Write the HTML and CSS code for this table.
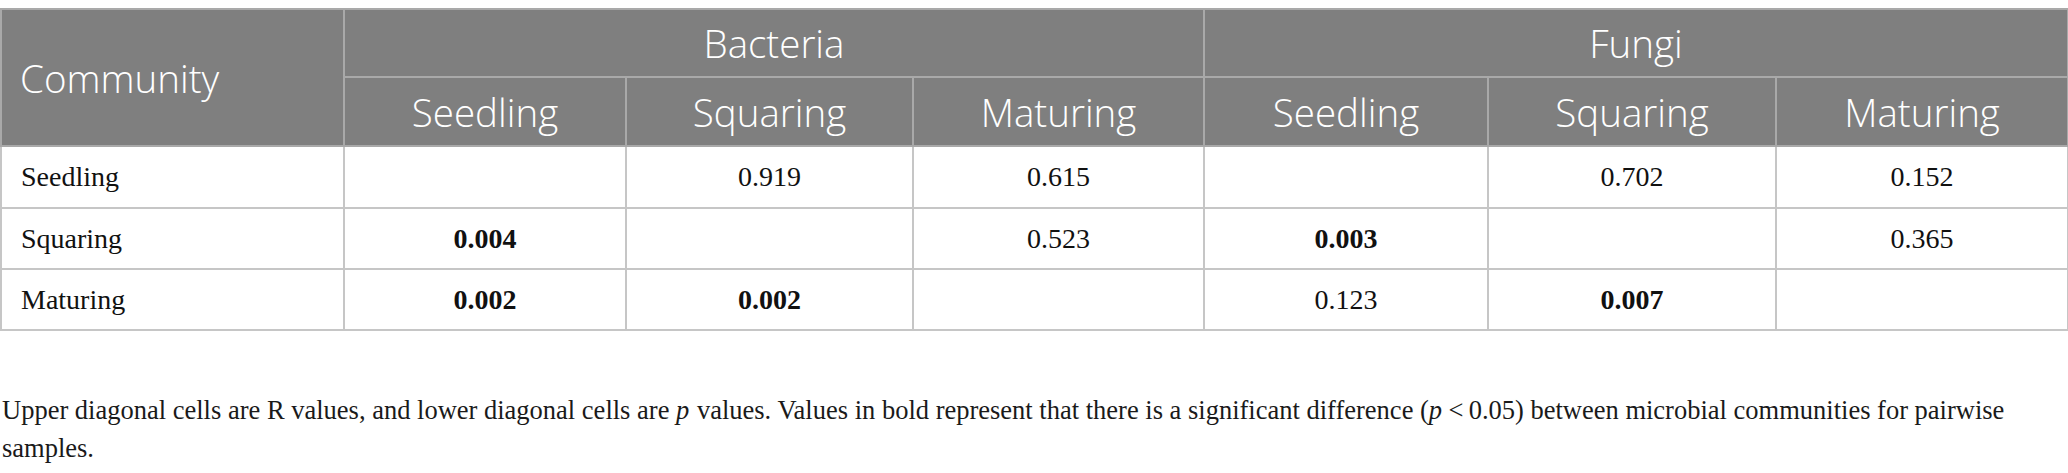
FILE: index.html
```html
<!DOCTYPE html>
<html lang="en">
<head>
<meta charset="utf-8">
<title>Table</title>
<link rel="stylesheet" href="styles.css">
</head>
<body>
<div class="page">
  <table class="data">
    <colgroup>
      <col class="c-label">
      <col class="c-b1">
      <col class="c-b2">
      <col class="c-b3">
      <col class="c-f1">
      <col class="c-f2">
      <col class="c-f3">
    </colgroup>
    <thead>
      <tr class="head-top">
        <th rowspan="2" class="th-label">Community</th>
        <th colspan="3">Bacteria</th>
        <th colspan="3">Fungi</th>
      </tr>
      <tr class="head-sub">
        <th>Seedling</th>
        <th>Squaring</th>
        <th>Maturing</th>
        <th>Seedling</th>
        <th>Squaring</th>
        <th>Maturing</th>
      </tr>
    </thead>
    <tbody>
      <tr class="row-first">
        <td class="label">Seedling</td>
        <td></td>
        <td>0.919</td>
        <td>0.615</td>
        <td></td>
        <td>0.702</td>
        <td>0.152</td>
      </tr>
      <tr>
        <td class="label">Squaring</td>
        <td><b>0.004</b></td>
        <td></td>
        <td>0.523</td>
        <td><b>0.003</b></td>
        <td></td>
        <td>0.365</td>
      </tr>
      <tr>
        <td class="label">Maturing</td>
        <td><b>0.002</b></td>
        <td><b>0.002</b></td>
        <td></td>
        <td>0.123</td>
        <td><b>0.007</b></td>
        <td></td>
      </tr>
    </tbody>
  </table>
  <p class="caption">Upper diagonal cells are R values, and lower diagonal cells are <span class="it">p</span> values. Values in bold represent that there is a significant difference (<span class="it">p</span>&#8201;&lt;&#8201;0.05) between microbial communities for pairwise samples.</p>
</div>
</body>
</html>
```
FILE: styles.css
```css
html, body {
  margin: 0;
  padding: 0;
  background: #ffffff;
}

.page {
  padding-top: 8px;
  width: 2067px;
}

.data {
  width: 2067px;
  border-collapse: collapse;
  table-layout: fixed;
}

.c-label { width: 343px; }
.c-b1 { width: 282px; }
.c-b2 { width: 287px; }
.c-b3 { width: 291px; }
.c-f1 { width: 284px; }
.c-f2 { width: 288px; }
.c-f3 { width: 292px; }

.data th {
  background: #7f7f7f;
  color: #ffffff;
  font-family: "Open Sans", "Liberation Sans", sans-serif;
  font-weight: 350;
  font-size: 38.5px;
  text-align: center;
  vertical-align: middle;
  border: 2px solid #a9a9a9;
  padding: 0;
}

.data .head-top th { height: 66px; }
.data .head-sub th { height: 67px; }

.data th.th-label {
  text-align: left;
  padding-left: 18px;
}

.data td {
  font-family: "Liberation Serif", "Times New Roman", serif;
  font-size: 28px;
  color: #111111;
  text-align: center;
  vertical-align: middle;
  border: 2px solid #c6c6c6;
  height: 59px;
  padding: 0;
}

.data .row-first td {
  height: 60px;
}

.data td.label {
  text-align: left;
  padding-left: 19px;
}

.data td b {
  font-weight: 700;
}

.caption {
  margin: 60px 0 0 0;
  padding-left: 2px;
  max-width: 2040px;
  font-family: "Liberation Serif", "Times New Roman", serif;
  font-size: 26.5px;
  line-height: 38px;
  color: #1a1a1a;
}

.caption .it {
  font-style: italic;
  padding-right: 1px;
}
```
